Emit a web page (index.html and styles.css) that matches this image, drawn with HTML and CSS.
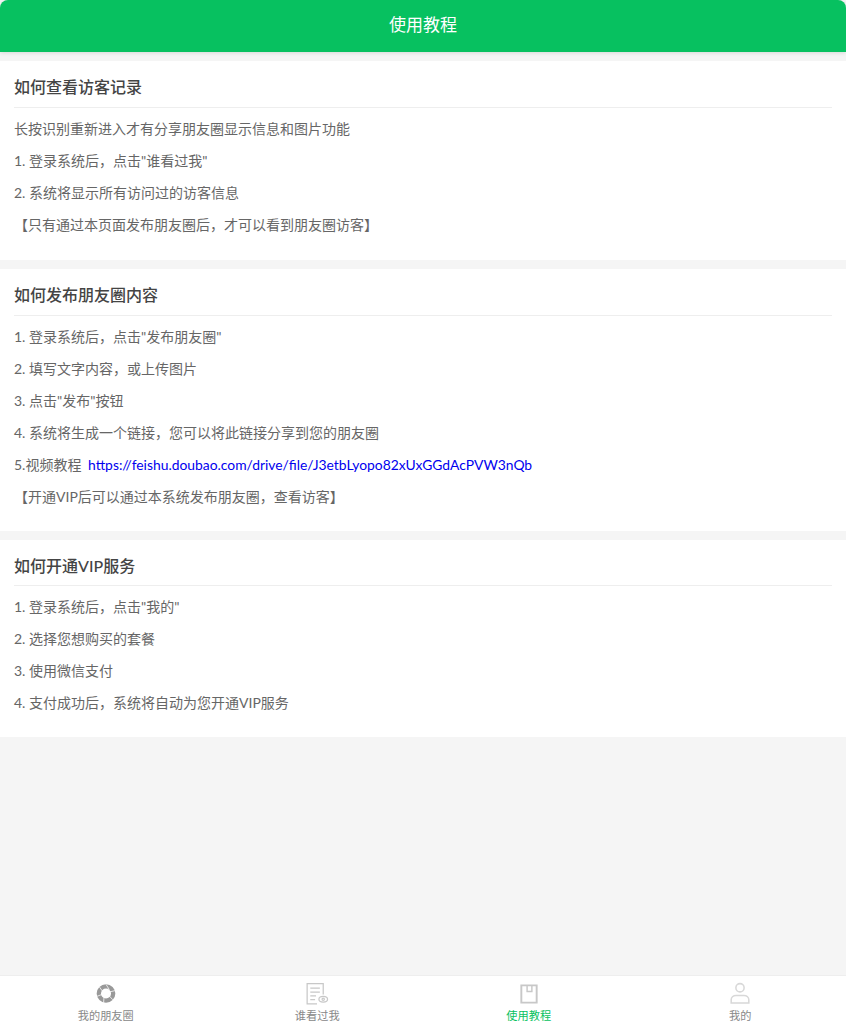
FILE: index.html
```html
<!DOCTYPE html>
<html lang="zh-CN">
<head>
    <meta charset="UTF-8">
    <meta name="viewport" content="width=device-width, initial-scale=1.0">
    <title>使用教程</title>
    <link rel="stylesheet" href="styles.css">
</head>
<body>
    <div class="page">
        <header class="header">使用教程</header>

        <main class="content">
            <section class="card">
                <h2>如何查看访客记录</h2>
                <p>长按识别重新进入才有分享朋友圈显示信息和图片功能</p>
                <p>1. 登录系统后，点击"谁看过我"</p>
                <p>2. 系统将显示所有访问过的访客信息</p>
                <p>【只有通过本页面发布朋友圈后，才可以看到朋友圈访客】</p>
            </section>

            <section class="card">
                <h2>如何发布朋友圈内容</h2>
                <p>1. 登录系统后，点击"发布朋友圈"</p>
                <p>2. 填写文字内容，或上传图片</p>
                <p>3. 点击"发布"按钮</p>
                <p>4. 系统将生成一个链接，您可以将此链接分享到您的朋友圈</p>
                <p>5.视频教程 <a href="#">https://feishu.doubao.com/drive/file/J3etbLyopo82xUxGGdAcPVW3nQb</a></p>
                <p>【开通VIP后可以通过本系统发布朋友圈，查看访客】</p>
            </section>

            <section class="card">
                <h2>如何开通VIP服务</h2>
                <p>1. 登录系统后，点击"我的"</p>
                <p>2. 选择您想购买的套餐</p>
                <p>3. 使用微信支付</p>
                <p>4. 支付成功后，系统将自动为您开通VIP服务</p>
            </section>
        </main>

        <nav class="tabbar">
            <a class="tab" href="#">
                <svg class="tab-icon" viewBox="0 0 24 24">
                    <circle cx="12" cy="12" r="7.500" fill="none" stroke="#999" stroke-width="4.500"/>
                    <path d="M12 2.500 15.500 8M21.500 9l-6.500 1.500M19 18.500l-4.500-5M9.500 21.500l.5-6.500M2.500 15l6.500-2.500M5 5l4 5.500" stroke="#fff" stroke-width=".8" fill="none"/>
                </svg>
                <span>我的朋友圈</span>
            </a>
            <a class="tab" href="#">
                <svg class="tab-icon" viewBox="0 0 24 24" fill="none" stroke="#c8c8c8" stroke-width="1.300">
                    <path d="M18.500 13V1.700H1.700v21H12"/>
                    <path d="M5 6.500h10M5 10.500h10M5 14.500h6M5 18.500h5"/>
                    <ellipse cx="18.500" cy="18" rx="4.500" ry="3"/>
                    <circle cx="18.500" cy="18" r="1.200"/>
                </svg>
                <span>谁看过我</span>
            </a>
            <a class="tab active" href="#">
                <svg class="tab-icon" viewBox="0 0 24 24" fill="none" stroke="#c8c8c8" stroke-width="2">
                    <path d="M4 3.500h16v18H4z"/>
                    <path d="M10 3.500v6.500h5V3.500" stroke-width="1.500"/>
                </svg>
                <span>使用教程</span>
            </a>
            <a class="tab" href="#">
                <svg class="tab-icon" viewBox="0 0 24 24" fill="none" stroke="#d8d8d8" stroke-width="1.600">
                    <circle cx="12" cy="6" r="4.300"/>
                    <path d="M2.800 22v-3.500c0-3 2.500-4.500 5-4.500h8.400c2.500 0 5 1.500 5 4.500V22z"/>
                </svg>
                <span>我的</span>
            </a>
        </nav>
    </div>
</body>
</html>
```

FILE: styles.css
```css
* {
    box-sizing: border-box;
}
html, body {
    margin: 0;
    padding: 0;
}
body {
    font-family: Lato, "Noto Sans CJK SC", sans-serif;
    background: #f5f5f5;
    color: #666;
}
.page {
    height: 1024px;
    display: flex;
    flex-direction: column;
    overflow: hidden;
}
.header {
    height: 52px;
    flex: none;
    background: #07c160;
    color: #fff;
    border-radius: 8px 8px 0 0;
    box-shadow: 0 1px 4px rgba(0,0,0,0.12);
    font-size: 17px;
    line-height: 50px;
    text-align: center;
}
.content {
    flex: 1;
    padding-top: 9px;
}
.card {
    background: #fff;
    padding: 15px 14px 14.500px;
    margin-bottom: 9px;
}
.card h2 {
    margin: 0 0 9px;
    padding-bottom: 10px;
    border-bottom: 1px solid #eee;
    font-size: 16px;
    font-weight: 500;
    line-height: 21px;
    color: #444;
}
.card:last-child {
    padding-bottom: 14px;
}
.card:last-child h2 {
    padding-bottom: 9px;
}
.card p {
    margin: 0 0 8px;
    font-size: 14px;
    line-height: 24px;
    color: #666;
}
.card a {
    color: #0000ee;
    font-size: 13.860px;
    text-decoration: none;
    margin-left: 3px;
}
.tabbar {
    height: 49px;
    flex: none;
    display: flex;
    background: #fff;
    border-top: 1px solid #eee;
}
.tab {
    flex: 1;
    display: flex;
    flex-direction: column;
    align-items: center;
    padding-top: 6px;
    font-size: 11.200px;
    line-height: 16px;
    color: #888;
    text-decoration: none;
}
.tab.active {
    color: #07c160;
}
.tab-icon {
    width: 24px;
    height: 24px;
    margin-bottom: 3px;
}
```
